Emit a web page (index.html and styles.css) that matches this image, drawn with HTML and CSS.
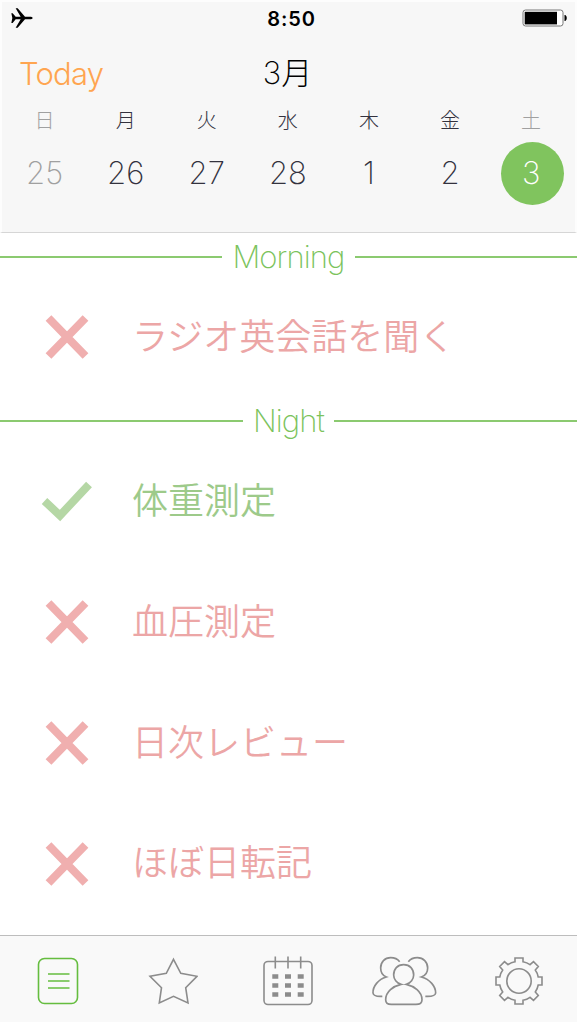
FILE: index.html
```html
<!DOCTYPE html>
<html lang="ja">
<head>
    <meta charset="UTF-8">
    <meta name="viewport" content="width=device-width, initial-scale=1.0">
    <title>3月</title>
    <link rel="stylesheet" href="styles.css">
</head>
<body>
    <div class="app">
        <header class="header">
            <div class="status-bar">
                <svg class="airplane" width="22" height="20" viewBox="0 0 66 60">
                    <path d="M1 16h4l9 10h15L14 1h6l22 25h18q5 1 5 4t-5 4H42L20 59h-6l15-25H14L5 45H1l3-15z"/>
                </svg>
                <span class="clock">8:50</span>
                <svg class="battery" width="45" height="18" viewBox="0 0 45 18">
                    <rect x="1" y="1" width="40" height="16" rx="2.5" fill="#fff" stroke="#777"/>
                    <rect x="2.7" y="2.8" width="32.3" height="12.6"/>
                    <path d="M42.5 6h.8q1.5 1 1.5 3t-1.5 3h-.8z"/>
                </svg>
            </div>
            <div class="title-bar">
                <a class="today">Today</a>
                <h1 class="month">3月</h1>
                <span></span>
            </div>
            <div class="week">
                <div class="day off"><span class="weekday">日</span><span class="date">25</span></div>
                <div class="day"><span class="weekday">月</span><span class="date">26</span></div>
                <div class="day"><span class="weekday">火</span><span class="date">27</span></div>
                <div class="day"><span class="weekday">水</span><span class="date">28</span></div>
                <div class="day"><span class="weekday">木</span><span class="date">1</span></div>
                <div class="day"><span class="weekday">金</span><span class="date">2</span></div>
                <div class="day off"><span class="weekday">土</span><span class="date selected">3</span></div>
            </div>
        </header>

        <main class="list">
            <h2 class="section">Morning</h2>
            <div class="task missed">
                <svg class="mark" width="52" height="44" viewBox="0 0 52 44"><path d="M7.500 3l37 38M44.500 3l-37 38"/></svg>
                <span class="name">ラジオ英会話を聞く</span>
            </div>

            <h2 class="section">Night</h2>
            <div class="task done">
                <svg class="mark" width="52" height="44" viewBox="0 0 52 44"><path d="M3.500 21L19 35.500L48 4.500"/></svg>
                <span class="name">体重測定</span>
            </div>
            <div class="task missed">
                <svg class="mark" width="52" height="44" viewBox="0 0 52 44"><path d="M7.500 3l37 38M44.500 3l-37 38"/></svg>
                <span class="name">血圧測定</span>
            </div>
            <div class="task missed">
                <svg class="mark" width="52" height="44" viewBox="0 0 52 44"><path d="M7.500 3l37 38M44.500 3l-37 38"/></svg>
                <span class="name">日次レビュー</span>
            </div>
            <div class="task missed">
                <svg class="mark" width="52" height="44" viewBox="0 0 52 44"><path d="M7.500 3l37 38M44.500 3l-37 38"/></svg>
                <span class="name">ほぼ日転記</span>
            </div>
        </main>

        <nav class="tab-bar">
            <a class="tab active">
                <svg width="42" height="48" viewBox="0 0 42 48">
                    <rect x="1.500" y="1.500" width="39" height="45" rx="6"/>
                    <path d="M11 17h21.500M11 24h21.500M11 31h21.500"/>
                </svg>
            </a>
            <a class="tab">
                <svg width="50" height="48" viewBox="0 0 50 48">
                    <path d="M25.500 2.300L32.800 16.300L49 19.300L37.700 30.700L40 46L25.500 39.300L11.300 46L13.500 30.700L2 19.300L18.300 16.300z"/>
                </svg>
            </a>
            <a class="tab">
                <svg width="50" height="50" viewBox="0 0 50 50">
                    <rect x="1" y="5.500" width="48" height="43" rx="4"/>
                    <path d="M12.300 .5v12M25 .5v12M37.700 .5v12"/>
                    <path class="dots" d="M9.300 20.500h6M22 20.500h6M34.700 20.500h6M9.300 29.500h6M22 29.500h6M34.700 29.500h6M9.300 38.500h6M22 38.500h6M34.700 38.500h6"/>
                </svg>
            </a>
            <a class="tab">
                <svg class="people" width="66" height="50" viewBox="33 90 198 150">
                    <path d="M131 116C112 116 101 129 101 147C101 159 110 171 123 175C100 180 77 197 77 221C77 231 84 235 94 235H168C180 235 186 231 186 221C186 197 162 180 139 175C152 171 161 159 161 147C161 129 150 116 131 116z"/>
                    <path d="M119 107C112 98 103 95 92 95C74 95 62 108 62 126C62 139 69 149 79 153C55 160 38 181 39 201C40 210 50 212 67 211"/>
                    <path d="M145 107C152 98 162 95 172 95C190 95 203 108 203 126C203 139 196 149 184 153C210 160 227 181 227 201C226 210 214 212 196 211"/>
                </svg>
            </a>
            <a class="tab">
                <svg width="50" height="50" viewBox="-25 -25 50 50">
                    <path d="M-4-23H4V-19.200Q8-18.500 11-16.300L14.500-19.300L19.300-14.500L16.300-11Q18.500-8 19.200-4H23V4H19.200Q18.500 8 16.300 11L19.300 14.500L14.500 19.300L11 16.300Q8 18.500 4 19.200V23H-4V19.200Q-8 18.500-11 16.300L-14.500 19.300L-19.300 14.500L-16.300 11Q-18.500 8-19.200 4H-23V-4H-19.200Q-18.500-8-16.300-11L-19.300-14.500L-14.500-19.300L-11-16.300Q-8-18.500-4-19.200z"/>
                    <circle r="12.200"/>
                </svg>
            </a>
        </nav>
    </div>
</body>
</html>
```
FILE: styles.css
```css
* {
    box-sizing: border-box;
}
body {
    margin: 0;
    background: #fff;
    font-family: Inter, "Noto Sans CJK JP", sans-serif;
    font-weight: 300;
}
.app {
    display: flex;
    flex-direction: column;
    width: 577px;
    height: 1024px;
    overflow: hidden;
}
.header {
    height: 233px;
    border: 2px solid #fdfdfd;
    border-bottom: 1px solid #d6d6d6;
    background: #f7f7f7;
}
.status-bar,
.title-bar {
    display: grid;
    grid-template-columns: 1fr auto 1fr;
    align-items: center;
}
.status-bar {
    height: 33px;
    padding: 0 8px 0 9px;
}
.airplane,
.battery {
    margin-bottom: 1px;
}
.clock {
    margin-left: 5px;
    font-size: 20px;
    font-weight: 600;
    letter-spacing: 0.9px;
}
.battery {
    justify-self: end;
}
.title-bar {
    height: 71px;
    padding: 5px 19px 0 17px;
}
.today {
    color: #ffa550;
    font-size: 31px;
    letter-spacing: -0.8px;
}
.month {
    margin: 0;
    font-size: 31px;
    font-weight: 200;
    line-height: 40px;
}
.week {
    display: grid;
    grid-template-columns: repeat(7, 81.1px);
    margin-left: 2px;
}
.day {
    display: flex;
    flex-direction: column;
    align-items: center;
    color: #33323e;
}
.off {
    color: #a0a0a0;
}
.weekday {
    height: 36px;
    font-size: 20px;
    line-height: 31px;
}
.date {
    width: 63px;
    height: 63px;
    border-radius: 50%;
    font-size: 31px;
    font-weight: 250;
    line-height: 61px;
    text-align: center;
}
.selected {
    margin-left: 2px;
    padding-right: 2px;
    background: #80c45e;
    color: #fff;
}
.list {
    flex: 1;
}
.section {
    display: flex;
    align-items: center;
    gap: 10px;
    height: 44px;
    margin: 0;
    padding-top: 3px;
    color: #7bc35c;
    font-size: 31px;
    font-weight: 250;
    line-height: 36px;
    letter-spacing: -0.9px;
}
.section::before,
.section::after {
    content: "";
    flex: 1;
    height: 2px;
    background: #8bca70;
}
.task {
    display: flex;
    align-items: center;
    gap: 39px;
    height: 120.600px;
    padding-left: 41px;
    font-size: 36px;
}
.name {
    padding-bottom: 7px;
    font-weight: 350;
}
.mark {
    fill: none;
    stroke: currentColor;
    stroke-width: 8;
}
.missed {
    color: #eca6a6;
}
.missed .mark {
    color: #f0afaf;
}
.done {
    color: #9dca8a;
}
.done .mark {
    color: #b5d7a5;
}
.tab-bar {
    display: grid;
    grid-template-columns: repeat(5, 1fr);
    height: 89px;
    border-top: 1.500px solid #bdbdbd;
    border-bottom: 2px solid #fff;
    background: #f9f9f9;
}
.tab {
    display: flex;
    align-items: center;
    justify-content: center;
    padding-top: 3px;
    color: #8c8c8c;
}
.tab svg {
    fill: none;
    stroke: currentColor;
    stroke-width: 1.6;
}
.tab .people {
    stroke-width: 5;
}
.tab .dots {
    stroke-width: 4.5;
}
.active {
    color: #65bd3f;
}
```
